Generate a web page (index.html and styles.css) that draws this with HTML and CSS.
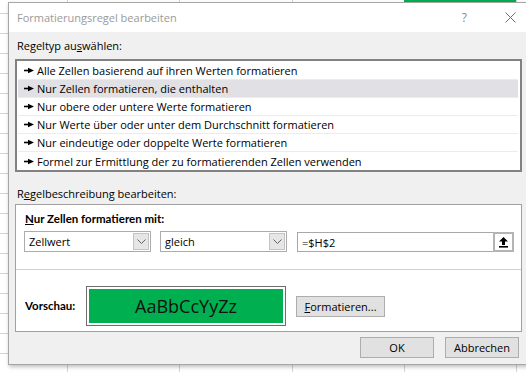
FILE: index.html
```html
<!DOCTYPE html>
<html lang="de">
<head>
<meta charset="utf-8">
<link rel="stylesheet" href="styles.css">
</head>
<body>
<div class="sheet">
  <div class="dialog">
    <div class="titlebar">
      <span class="title">Formatierungsregel bearbeiten</span>
      <span class="help">?</span>
      <svg class="close" width="11" height="11" viewBox="0 0 11 11"><path d="M0.5 0.5 L10.5 10.5 M10.5 0.5 L0.5 10.5" stroke="#6d6d6d" stroke-width="1" fill="none"/></svg>
    </div>
    <div class="content">
      <div class="label">Regeltyp au<u>s</u>wählen:</div>
      <div class="listbox">
        <div class="item"><svg class="bullet" width="10" height="7" viewBox="0 0 10 7"><path d="M0 3.5 H5" stroke="#000" stroke-width="1.6"/><path d="M4 0.8 L10 3.5 L4 6.2 Z" fill="#000"/></svg>Alle Zellen basierend auf ihren Werten formatieren</div>
        <div class="item selected"><svg class="bullet" width="10" height="7" viewBox="0 0 10 7"><path d="M0 3.5 H5" stroke="#000" stroke-width="1.6"/><path d="M4 0.8 L10 3.5 L4 6.2 Z" fill="#000"/></svg>Nur Zellen formatieren, die enthalten</div>
        <div class="item"><svg class="bullet" width="10" height="7" viewBox="0 0 10 7"><path d="M0 3.5 H5" stroke="#000" stroke-width="1.6"/><path d="M4 0.8 L10 3.5 L4 6.2 Z" fill="#000"/></svg>Nur obere oder untere Werte formatieren</div>
        <div class="item"><svg class="bullet" width="10" height="7" viewBox="0 0 10 7"><path d="M0 3.5 H5" stroke="#000" stroke-width="1.6"/><path d="M4 0.8 L10 3.5 L4 6.2 Z" fill="#000"/></svg>Nur Werte über oder unter dem Durchschnitt formatieren</div>
        <div class="item"><svg class="bullet" width="10" height="7" viewBox="0 0 10 7"><path d="M0 3.5 H5" stroke="#000" stroke-width="1.6"/><path d="M4 0.8 L10 3.5 L4 6.2 Z" fill="#000"/></svg>Nur eindeutige oder doppelte Werte formatieren</div>
        <div class="item last"><svg class="bullet" width="10" height="7" viewBox="0 0 10 7"><path d="M0 3.5 H5" stroke="#000" stroke-width="1.6"/><path d="M4 0.8 L10 3.5 L4 6.2 Z" fill="#000"/></svg>Formel zur Ermittlung der zu formatierenden Zellen verwenden</div>
      </div>
      <div class="label label2">R<u>e</u>gelbeschreibung bearbeiten:</div>
      <div class="descbox">
        <div class="criteria">
          <div class="bold"><u>N</u>ur Zellen formatieren mit:</div>
          <div class="controls">
            <div class="combo">
              <span class="combo-text">Zellwert</span>
              <span class="combo-btn"><svg width="9" height="5" viewBox="0 0 9 5"><path d="M0.5 0.5 L4.5 4.5 L8.5 0.5" stroke="#606060" fill="none"/></svg></span>
            </div>
            <div class="combo">
              <span class="combo-text">gleich</span>
              <span class="combo-btn"><svg width="9" height="5" viewBox="0 0 9 5"><path d="M0.5 0.5 L4.5 4.5 L8.5 0.5" stroke="#606060" fill="none"/></svg></span>
            </div>
            <div class="refinput">
              <span class="ref-text">=$H$2</span>
              <span class="ref-btn"><svg width="11" height="12" viewBox="0 0 11 12"><path d="M5.5 1 L10 5.5 L7 5.5 L7 9 L4 9 L4 5.5 L1 5.5 Z" fill="#000"/><rect x="1" y="10" width="9" height="1.6" fill="#000"/></svg></span>
            </div>
          </div>
        </div>
        <div class="preview-row">
          <div class="bold preview-label">Vorschau:</div>
          <div class="preview"><div class="preview-fill">AaBbCcYyZz</div></div>
          <div class="button fmt"><u>F</u>ormatieren...</div>
        </div>
      </div>
      <div class="footer">
        <div class="button">OK</div>
        <div class="button">Abbrechen</div>
      </div>
    </div>
  </div>
</div>
</body>
</html>
```

FILE: styles.css
```css
html, body {
  margin: 0;
  padding: 0;
}
body {
  width: 526px;
  height: 372px;
  overflow: hidden;
  font-family: "Open Sans", "Liberation Sans", sans-serif;
  font-size: 11px;
  color: #000;
}
.sheet {
  width: 526px;
  height: 372px;
  overflow: hidden;
  background-color: #fff;
  background-image:
    linear-gradient(#00b050, #00b050),
    repeating-linear-gradient(to right, transparent 0, transparent 67px, #d4d4d4 67px, #d4d4d4 68px, transparent 68px, transparent 112.3px),
    repeating-linear-gradient(to bottom, transparent 0, transparent 13px, #d4d4d4 13px, #d4d4d4 14px, transparent 14px, transparent 20px);
  background-size: 112px 2px, 526px 372px, 526px 372px;
  background-position: 404px 0, 0 0, 0 0;
  background-repeat: no-repeat, no-repeat, no-repeat;
  padding: 2px 0 0 8px;
  box-sizing: border-box;
}
.dialog {
  width: 530px;
  height: 363px;
  border: 1px solid #a6a6a6;
  border-right: none;
  box-sizing: border-box;
  background: #f0f0f0;
  box-shadow: 1px 2px 4px rgba(0,0,0,0.25);
  display: flex;
  flex-direction: column;
}
.titlebar {
  height: 29px;
  background: #fff;
  display: flex;
  align-items: center;
  padding-left: 8px;
  flex-shrink: 0;
}
.title {
  color: #9a9a9a;
  font-size: 11px;
  flex: 1;
}
.help {
  color: #8a8a8a;
  font-size: 12px;
  margin-right: 38px;
}
.close {
  margin-right: 22px;
}
.content {
  padding: 5px 0 0 6px;
  display: flex;
  flex-direction: column;
  flex: 1;
}
.label {
  height: 22px;
  line-height: 17px;
  padding-left: 2px;
}
.label2 {
  margin-top: 15px;
  height: 14px;
  line-height: 14px;
  margin-bottom: 3px;
}
.listbox {
  width: 507px;
  height: 113px;
  border: 2px solid #828282;
  box-sizing: border-box;
  background: #fff;
  padding: 1px 2px 0 1px;
}
.item {
  height: 18px;
  display: flex;
  align-items: center;
  border-bottom: 1px solid #ececec;
  box-sizing: border-box;
  padding-left: 6px;
  white-space: nowrap;
}
.item.selected {
  background: #e0e0e5;
}
.item.last {
  border-bottom: none;
}
.bullet {
  margin-right: 3px;
}
.descbox {
  width: 507px;
  height: 128px;
  border: 1px solid #a0a0a0;
  box-sizing: border-box;
  background: #fff;
  display: flex;
  flex-direction: column;
}
.criteria {
  padding: 6px 0 0 9px;
  height: 65px;
  box-sizing: border-box;
  border-bottom: 1px solid #d0d0d0;
}
.bold {
  font-family: Lato, "Open Sans", sans-serif;
  font-weight: bold;
  font-size: 11.5px;
  line-height: 16px;
}
.controls {
  display: flex;
  gap: 9px;
  margin-top: 4px;
  margin-left: -1px;
}
.combo {
  width: 127px;
  height: 21px;
  border: 1px solid #acacac;
  box-sizing: border-box;
  display: flex;
  align-items: center;
  justify-content: space-between;
  padding: 0 1px 0 4px;
}
.combo-btn {
  width: 16px;
  height: 17px;
  background: #e6e6e6;
  border: 1px solid #c4c4c4;
  box-sizing: border-box;
  display: flex;
  align-items: center;
  justify-content: center;
}
.refinput {
  width: 217px;
  height: 20px;
  margin-top: 1px;
  margin-left: 1px;
  border: 1px solid #a8a8a8;
  box-sizing: border-box;
  display: flex;
  align-items: center;
  justify-content: space-between;
  padding-left: 4px;
}
.ref-btn {
  width: 21px;
  height: 20px;
  margin-right: -1px;
  margin-top: -1px;
  border: 2px solid #b4b4b4;
  background: #fff;
  box-sizing: border-box;
  display: flex;
  align-items: center;
  justify-content: center;
}
.preview-row {
  display: flex;
  align-items: center;
  padding-left: 9px;
  padding-top: 16px;
}
.preview-label {
  width: 61px;
}
.preview {
  width: 200px;
  height: 40px;
  border: 1px solid #6e6e6e;
  padding: 2px;
  box-sizing: border-box;
}
.preview-fill {
  height: 100%;
  background: #00b050;
  display: flex;
  align-items: center;
  justify-content: center;
  font-family: "Open Sans", sans-serif;
  font-size: 18px;
  color: #111;
}
.button {
  width: 74px;
  height: 21px;
  background: #e1e1e1;
  border: 1px solid #adadad;
  box-sizing: border-box;
  display: flex;
  align-items: center;
  justify-content: center;
}
.fmt {
  width: 89px;
  margin-left: 10px;
  margin-top: 1px;
}
.footer {
  display: flex;
  justify-content: flex-end;
  gap: 11px;
  padding-right: 19px;
  margin-top: 5px;
}
```
